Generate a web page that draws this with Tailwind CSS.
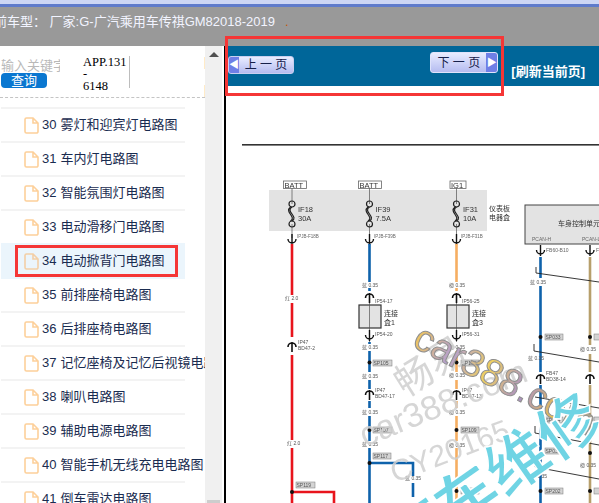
<!DOCTYPE html>
<html lang="zh-CN">
<head>
  <meta charset="UTF-8" />
  <title>电路图</title>
  <script src="https://cdn.jsdelivr.net/npm/@tailwindcss/browser@4"></script>
</head>
<body class="relative w-[599px] h-[503px] overflow-hidden bg-white text-[13px] font-['Liberation_Sans','Noto_Sans_CJK_SC',sans-serif]">
  <!-- top strip and title bar -->
  <div class="h-[4px] bg-[#cdd6f4]"></div>
  <div class="h-[3px] bg-[#5f7bcb]"></div>
  <div class="h-[39px] bg-[#999999] pt-[7px] -ml-[6px] whitespace-nowrap text-[#f2f4ff] text-[13px] leading-[16px]">前车型： 厂家:G-广汽乘用车传祺GM82018-2019<span class="ml-[10px] text-[#c2570c]">.</span></div>

  <div class="flex h-[457px]">
    <!-- left panel -->
    <div class="w-[205px] overflow-hidden">
      <div class="flex h-[52px] border-b border-dashed border-[#c4c4c4] whitespace-nowrap">
        <div class="w-[59px] ml-[1px] pt-[12px] shrink-0">
          <div class="h-[15px] overflow-hidden text-[#b9b9b9] leading-[15px]">输入关键字</div>
          <div class="w-[46px] h-[15px] rounded-[4px] bg-[#0a77d0] text-white text-center leading-[15px]">查询</div>
        </div>
        <div class="w-[47px] ml-[23px] mt-[10px] h-[32px] border-r border-[#bdbdbd] font-['Liberation_Serif','Noto_Sans_CJK_SC',serif] text-black text-[12.5px] leading-[12px] whitespace-normal break-all shrink-0">APP.131-<br>6148</div>
        <div class="ml-[73px] pt-[3px] text-[#1a2c50] leading-[28px] shrink-0">目<br>目</div>
      </div>
      <ul class="mt-[9px] ml-[1px] text-[#1a2c50] whitespace-nowrap">
        <li class="flex items-center w-[184px] h-[34px] border-t-2 border-[#f3f3f3] pl-[23px]"><svg class="w-[15px] h-[17px] shrink-0" viewBox="0 0 15 17" fill="none" stroke="#fdd09a" stroke-width="1.6"><path d="M2.5 1H9l5 5v8.5a1.5 1.5 0 0 1-1.5 1.5h-10A1.5 1.5 0 0 1 1 14.500V2.500A1.500 1.500 0 0 1 2.500 1zM9 1v5h5"/></svg><span class="ml-[3px]">30</span><span class="ml-[4px]">雾灯和迎宾灯电路图</span></li>
        <li class="flex items-center w-[184px] h-[34px] border-t-2 border-[#f3f3f3] pl-[23px]"><svg class="w-[15px] h-[17px] shrink-0" viewBox="0 0 15 17" fill="none" stroke="#fdd09a" stroke-width="1.6"><path d="M2.5 1H9l5 5v8.500a1.500 1.500 0 0 1-1.500 1.500h-10A1.500 1.500 0 0 1 1 14.500V2.500A1.500 1.500 0 0 1 2.500 1zM9 1v5h5"/></svg><span class="ml-[3px]">31</span><span class="ml-[4px]">车内灯电路图</span></li>
        <li class="flex items-center w-[184px] h-[34px] border-t-2 border-[#f3f3f3] pl-[23px]"><svg class="w-[15px] h-[17px] shrink-0" viewBox="0 0 15 17" fill="none" stroke="#fdd09a" stroke-width="1.6"><path d="M2.5 1H9l5 5v8.500a1.500 1.500 0 0 1-1.500 1.500h-10A1.500 1.500 0 0 1 1 14.500V2.500A1.500 1.500 0 0 1 2.500 1zM9 1v5h5"/></svg><span class="ml-[3px]">32</span><span class="ml-[4px]">智能氛围灯电路图</span></li>
        <li class="flex items-center w-[184px] h-[34px] border-t-2 border-[#f3f3f3] pl-[23px]"><svg class="w-[15px] h-[17px] shrink-0" viewBox="0 0 15 17" fill="none" stroke="#fdd09a" stroke-width="1.6"><path d="M2.5 1H9l5 5v8.500a1.500 1.500 0 0 1-1.500 1.500h-10A1.500 1.500 0 0 1 1 14.500V2.500A1.500 1.500 0 0 1 2.500 1zM9 1v5h5"/></svg><span class="ml-[3px]">33</span><span class="ml-[4px]">电动滑移门电路图</span></li>
        <li class="flex items-center w-[184px] h-[34px] border-t-2 border-[#ebf5fc] bg-[#ebf5fc] pl-[23px]"><svg class="w-[15px] h-[17px] shrink-0" viewBox="0 0 15 17" fill="none" stroke="#f3cfa6" stroke-width="1.600"><path d="M2.5 1H9l5 5v8.500a1.500 1.500 0 0 1-1.500 1.500h-10A1.500 1.500 0 0 1 1 14.500V2.500A1.500 1.500 0 0 1 2.500 1zM9 1v5h5"/></svg><span class="ml-[3px]">34</span><span class="ml-[4px]">电动掀背门电路图</span></li>
        <li class="flex items-center w-[184px] h-[34px] border-t-2 border-[#ebf5fc] pl-[23px]"><svg class="w-[15px] h-[17px] shrink-0" viewBox="0 0 15 17" fill="none" stroke="#fdd09a" stroke-width="1.6"><path d="M2.5 1H9l5 5v8.500a1.500 1.500 0 0 1-1.500 1.500h-10A1.500 1.500 0 0 1 1 14.500V2.500A1.500 1.500 0 0 1 2.500 1zM9 1v5h5"/></svg><span class="ml-[3px]">35</span><span class="ml-[4px]">前排座椅电路图</span></li>
        <li class="flex items-center w-[184px] h-[34px] border-t-2 border-[#f3f3f3] pl-[23px]"><svg class="w-[15px] h-[17px] shrink-0" viewBox="0 0 15 17" fill="none" stroke="#fdd09a" stroke-width="1.6"><path d="M2.5 1H9l5 5v8.500a1.500 1.500 0 0 1-1.500 1.500h-10A1.500 1.500 0 0 1 1 14.500V2.500A1.500 1.500 0 0 1 2.500 1zM9 1v5h5"/></svg><span class="ml-[3px]">36</span><span class="ml-[4px]">后排座椅电路图</span></li>
        <li class="flex items-center w-[184px] h-[34px] border-t-2 border-[#f3f3f3] pl-[23px]"><svg class="w-[15px] h-[17px] shrink-0" viewBox="0 0 15 17" fill="none" stroke="#fdd09a" stroke-width="1.6"><path d="M2.5 1H9l5 5v8.500a1.500 1.500 0 0 1-1.500 1.500h-10A1.500 1.500 0 0 1 1 14.500V2.500A1.500 1.500 0 0 1 2.500 1zM9 1v5h5"/></svg><span class="ml-[3px]">37</span><span class="ml-[4px]">记忆座椅及记忆后视镜电路图</span></li>
        <li class="flex items-center w-[184px] h-[34px] border-t-2 border-[#f3f3f3] pl-[23px]"><svg class="w-[15px] h-[17px] shrink-0" viewBox="0 0 15 17" fill="none" stroke="#fdd09a" stroke-width="1.6"><path d="M2.5 1H9l5 5v8.500a1.500 1.500 0 0 1-1.500 1.500h-10A1.500 1.500 0 0 1 1 14.500V2.500A1.500 1.500 0 0 1 2.500 1zM9 1v5h5"/></svg><span class="ml-[3px]">38</span><span class="ml-[4px]">喇叭电路图</span></li>
        <li class="flex items-center w-[184px] h-[34px] border-t-2 border-[#f3f3f3] pl-[23px]"><svg class="w-[15px] h-[17px] shrink-0" viewBox="0 0 15 17" fill="none" stroke="#fdd09a" stroke-width="1.6"><path d="M2.5 1H9l5 5v8.500a1.500 1.500 0 0 1-1.500 1.500h-10A1.500 1.500 0 0 1 1 14.500V2.500A1.500 1.500 0 0 1 2.500 1zM9 1v5h5"/></svg><span class="ml-[3px]">39</span><span class="ml-[4px]">辅助电源电路图</span></li>
        <li class="flex items-center w-[184px] h-[34px] border-t-2 border-[#f3f3f3] pl-[23px]"><svg class="w-[15px] h-[17px] shrink-0" viewBox="0 0 15 17" fill="none" stroke="#fdd09a" stroke-width="1.6"><path d="M2.5 1H9l5 5v8.500a1.500 1.500 0 0 1-1.500 1.500h-10A1.500 1.500 0 0 1 1 14.500V2.500A1.500 1.500 0 0 1 2.500 1zM9 1v5h5"/></svg><span class="ml-[3px]">40</span><span class="ml-[4px]">智能手机无线充电电路图</span></li>
        <li class="flex items-center w-[184px] h-[34px] border-t-2 border-[#f3f3f3] pl-[23px]"><svg class="w-[15px] h-[17px] shrink-0" viewBox="0 0 15 17" fill="none" stroke="#fdd09a" stroke-width="1.6"><path d="M2.5 1H9l5 5v8.500a1.500 1.500 0 0 1-1.500 1.500h-10A1.500 1.500 0 0 1 1 14.500V2.500A1.500 1.500 0 0 1 2.500 1zM9 1v5h5"/></svg><span class="ml-[3px]">41</span><span class="ml-[4px]">倒车雷达电路图</span></li>
      </ul>
    </div>

    <!-- scrollbar -->
    <div class="flex flex-col justify-between w-[17px] bg-[#f0f0f0] pt-[6px]">
      <div class="mx-auto w-0 h-0 border-x-[5px] border-x-transparent border-b-[5px] border-b-[#505050]"></div>
      <div class="mx-[2px] h-[3px] bg-[#cdcdcd]"></div>
    </div>

    <!-- right pane -->
    <div class="ml-[2px] flex-1 min-w-0 border-l-2 border-black flex flex-col">
      <div class="flex items-center h-[40px] bg-[#006699] pl-[2px] pr-[14px]">
        <div class="mr-auto mt-[-3px] flex items-center w-[66px] h-[18px] rounded-[3px] border border-[#c9cff0] bg-gradient-to-b from-[#e9ecff] to-[#b5bcf0] overflow-hidden">
          <span class="flex items-center justify-center w-[10px] h-full bg-[#6f7fe6] text-white text-[10px] leading-none">◀</span>
          <span class="flex-1 text-center text-[#16204a] text-[12px] whitespace-pre">上 一 页</span>
        </div>
        <div class="mt-[-7px] flex items-center w-[68px] h-[21px] rounded-[3px] border border-[#dfe3fb] bg-gradient-to-b from-[#e9ecff] to-[#b5bcf0] overflow-hidden">
          <span class="flex-1 text-center text-[#16204a] text-[12px] whitespace-pre">下 一 页</span>
          <span class="flex items-center justify-center w-[11px] h-full bg-[#6f7fe6] text-white text-[10px] leading-none">▶</span>
        </div>
        <span class="ml-[13px] mt-[11px] text-white font-bold text-[13px] whitespace-nowrap">[刷新当前页]</span>
      </div>

      <!-- circuit diagram, drawn in page coordinates -->
      <svg class="flex-1 w-full blur-[0.45px]" viewBox="226 86 373 417" font-family="Liberation Sans, Noto Sans CJK SC, sans-serif">
        <defs>
          <linearGradient id="wm" x1="0" y1="0" x2="1" y2="0">
            <stop offset="0" stop-color="#f0c65c"/><stop offset="0.2" stop-color="#b49fd0"/><stop offset="0.4" stop-color="#f0d060"/><stop offset="0.6" stop-color="#a98fc8"/><stop offset="0.8" stop-color="#e8c050"/><stop offset="1" stop-color="#9d9d9d"/>
          </linearGradient>
          <g id="down"><path d="M0 -6V5M-4 -1A4 4 0 0 0 4 -1" fill="none" stroke="#111" stroke-width="1.400"/></g>
          <g id="up"><path d="M0 6V-4M-4 1A4 4 0 0 1 4 1" fill="none" stroke="#111" stroke-width="1.600"/></g>
          <g id="fuse" fill="none" stroke="#222" stroke-width="1.200"><circle cx="0" cy="-10" r="3"/><circle cx="0" cy="10" r="3"/><path d="M0 -7C-7 -3 7 3 0 7M-1.500 -7C-8 -2 5 3 -1.500 7"/></g>
        </defs>

        <rect x="242" y="144" width="357" height="1.600" fill="#333"/>

        <!-- fuse box -->
        <rect x="269" y="190" width="218" height="41" fill="#e3e3e3"/>
        <g fill="none" stroke="#666" stroke-width="0.800">
          <path d="M292 188V204M292 224V238M369.500 188V204M369.500 224V238M456.500 188V204M456.500 224V238"/>
          <rect x="283.500" y="181" width="23" height="7.500"/><rect x="358.500" y="181" width="23" height="7.500"/><rect x="450" y="181" width="16" height="7.500"/>
        </g>
        <g font-size="7.500" fill="#333">
          <text x="284.500" y="187.500">BATT</text><text x="359.500" y="187.500">BATT</text><text x="451" y="187.500">IG1</text>
          <text x="298" y="212">IF18</text><text x="298" y="221">30A</text>
          <text x="375.500" y="212">IF39</text><text x="375.500" y="221">7.5A</text>
          <text x="463" y="212">IF31</text><text x="463" y="221">10A</text>
          <text x="489" y="211" font-size="7">仪表板</text><text x="489" y="220" font-size="7">电器盒</text>
        </g>
        <use href="#fuse" x="292" y="214"/><use href="#fuse" x="369.500" y="214"/><use href="#fuse" x="456.500" y="214"/>
        <use href="#down" x="292" y="240"/><use href="#down" x="369.500" y="240"/><use href="#down" x="456.500" y="240"/>
        <g font-size="4.500" fill="#666">
          <text x="297" y="238">IPJB-F18B</text><text x="374" y="238">IPJB-F39B</text><text x="461" y="238">IPJB-F31B</text>
        </g>

        <!-- wires -->
        <g fill="none" stroke-width="2.600">
          <path stroke="#e8141c" d="M292 244V295M292 303V337M292 355V440M292 448V503M292 492H334V503"/>
          <path stroke="#0e62ab" d="M369.500 244V282M369.500 288V291M369.500 342V344M369.500 351V372M369.500 380V389M369.500 401V408M369.500 416V441M369.500 448V503M369.500 463H413V476M413 483V497"/>
          <path stroke="#f6ae62" d="M456.500 244V282M456.500 288V291M456.500 351V372M456.500 380V389M456.500 401V408M456.500 416V441M456.500 448V503"/>
          <path stroke="#0e62ab" d="M540.500 257V278M540.500 286V372M540.500 385V503"/>
          <path stroke="#b79f6b" d="M590 257V345M590 354V372M590 385V503"/>
        </g>

        <!-- connector boxes -->
        <g fill="#e3e3e3" stroke="#333" stroke-width="1.200">
          <rect x="359" y="305" width="22" height="23"/><rect x="447" y="305" width="22" height="23"/>
        </g>
        <path d="M369.500 296V342M456.500 296V342" stroke="#555" stroke-width="0.700"/>
        <g font-size="7" fill="#333">
          <text x="384" y="316">连接</text><text x="384" y="325">盒1</text>
          <text x="472" y="316">连接</text><text x="472" y="325">盒3</text>
        </g>
        <use href="#up" x="369.500" y="297"/><use href="#up" x="456.500" y="297"/>
        <use href="#down" x="369.500" y="336"/><use href="#down" x="456.500" y="336"/>
        <use href="#up" x="292" y="346"/><use href="#up" x="369.500" y="394"/><use href="#up" x="456.500" y="394"/>
        <use href="#up" x="540.500" y="378"/><use href="#up" x="590" y="378"/>

        <!-- control unit -->
        <rect x="525" y="205" width="80" height="39" fill="#e3e3e3" stroke="#444" stroke-width="1"/>
        <text x="558" y="226" font-size="7" fill="#333">车身控制单元</text>
        <g font-size="5" fill="#666">
          <text x="532" y="241">PCAN-H</text><text x="582" y="241">PCAN-L</text>
          <text x="546" y="252">FB60-B10</text><text x="596" y="252">FB</text>
        </g>
        <use href="#down" x="540.500" y="251"/><use href="#down" x="590" y="251"/>

        <!-- splices -->
        <g fill="#111">
          <circle cx="292" cy="492" r="2"/><circle cx="369.500" cy="362.500" r="2"/><circle cx="369.500" cy="430" r="2"/><circle cx="369.500" cy="463" r="2"/>
          <circle cx="456.500" cy="362.500" r="2"/><circle cx="456.500" cy="430" r="2"/><circle cx="456.500" cy="491" r="2"/>
          <circle cx="540.500" cy="337" r="2"/><circle cx="540.500" cy="420" r="2"/><circle cx="540.500" cy="491" r="2"/>
          <circle cx="590" cy="337" r="2"/><circle cx="590" cy="420" r="2"/><circle cx="590" cy="453" r="2"/><circle cx="590" cy="491" r="2"/>
        </g>
        <g fill="#d4d4d4" stroke="#777" stroke-width="0.500">
          <rect x="296" y="482" width="19" height="6"/><rect x="373" y="360" width="19" height="6"/><rect x="373" y="427" width="19" height="6"/><rect x="373" y="453" width="18" height="6"/>
          <rect x="461" y="360" width="18" height="6"/><rect x="461" y="427" width="18" height="6"/><rect x="461" y="488" width="18" height="6"/>
          <rect x="545" y="334" width="18" height="6"/><rect x="545" y="417" width="18" height="6"/><rect x="545" y="448" width="18" height="6"/><rect x="545" y="488" width="18" height="6"/>
          <rect x="594" y="334" width="10" height="6"/><rect x="594" y="417" width="10" height="6"/><rect x="594" y="488" width="10" height="6"/>
        </g>
        <g font-size="5" fill="#555">
          <text x="296.500" y="487">SP119</text><text x="373.500" y="365">SP105</text><text x="373.500" y="432">SP107</text><text x="373.500" y="458">SP117</text>
          <text x="461.500" y="365">SP108</text><text x="461.500" y="432">SP109</text><text x="461.500" y="493">SP120</text>
          <text x="545.500" y="339">SP033</text><text x="545.500" y="422">SP034</text><text x="545.500" y="453">SP035</text><text x="545.500" y="493">SP202</text>
          <text x="285" y="300">红 2.0</text><text x="287" y="445">红 2.0</text>
          <text x="362" y="287">蓝 0.35</text><text x="449" y="287">橙 0.35</text>
          <text x="362" y="349">蓝 0.35</text><text x="362" y="378">蓝 0.35</text><text x="362" y="414">蓝 0.35</text><text x="362" y="446">蓝 0.35</text><text x="405" y="480">蓝 0.35</text>
          <text x="449" y="349">橙 0.35</text><text x="449" y="377">橙 0.35</text><text x="449" y="414">橙 0.35</text><text x="449" y="447">橙 0.35</text>
          <text x="530" y="284">蓝 0.35</text><text x="528" y="360">蓝 0.35</text><text x="531" y="478">蓝 0.35</text><text x="580" y="351">橙 0.35</text><text x="580" y="467">橙 0.35</text>
          <text x="375" y="303">IP54-17</text><text x="375" y="336">IP54-20</text><text x="462" y="303">IP56-25</text><text x="462" y="336">IP56-31</text>
          <text x="298" y="344">IP47</text><text x="298" y="350">BD47-2</text>
          <text x="375" y="392">IP47</text><text x="375" y="398">BD47-17</text>
          <text x="462" y="392">IP47</text><text x="462" y="398">BD47-13</text>
          <text x="546" y="375">FB47</text><text x="546" y="381">BD38-14</text>
        </g>

        <!-- signal crossing lines -->
        <path d="M534 344V351L599 362M535 397L599 408M535 426V433L599 445M535 460V467L599 479M536 267V273L599 282" fill="none" stroke="#222" stroke-width="0.900"/>

        <!-- watermarks -->
        <g fill="#cfcfcf" fill-opacity="0.85">
          <text transform="translate(405 398) rotate(-32)" font-size="38">畅易</text>
          <text transform="translate(365 447) rotate(-22)" font-size="34">car388.com</text>
          <text transform="translate(395 483) rotate(-21)" font-size="30">CY20165</text>
        </g>
        <text transform="translate(411 346) rotate(27)" font-size="38" fill="url(#wm)" stroke="#8f8f8f" stroke-width="1">car388.com</text>
        <text transform="translate(416 533) rotate(-35)" x="-31" y="22" font-size="62" font-weight="700" fill="#6fd4e4" stroke="#ffffff" stroke-width="1.500">汽车维修</text>
      </svg>
    </div>
  </div>

  <!-- red annotation boxes -->
  <div class="absolute left-[225px] top-[36px] w-[279px] h-[60px] border-[3px] border-[#f53636]"></div>
  <div class="absolute left-[15px] top-[245px] w-[163px] h-[32px] border-[3px] border-[#f53636]"></div>
</body>
</html>
